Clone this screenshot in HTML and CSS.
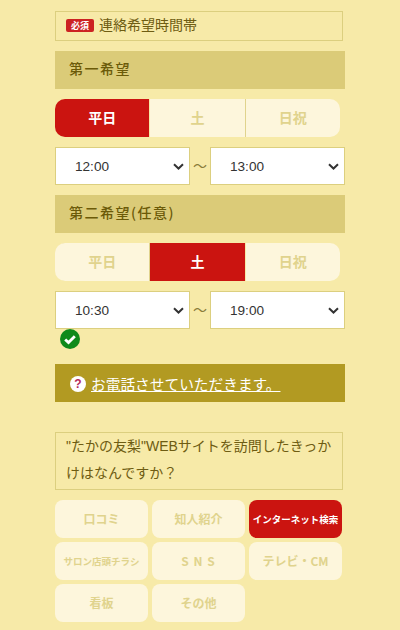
FILE: index.html
```html
<!DOCTYPE html>
<html lang="ja">
<head>
<meta charset="utf-8">
<title>連絡希望時間帯</title>
<link rel="stylesheet" href="styles.css">
</head>
<body>
<main class="form">
  <div class="label-box label-one"><span class="req">必須</span><span class="label-text">連絡希望時間帯</span></div>
  <h3 class="heading">第一希望</h3>
  <div class="toggle">
    <div class="seg seg-on">平日</div>
    <div class="seg">土</div>
    <div class="seg">日祝</div>
  </div>
  <div class="times">
    <select class="sel"><option>12:00</option></select>
    <span class="tilde">～</span>
    <select class="sel"><option>13:00</option></select>
  </div>
  <h3 class="heading">第二希望(任意)</h3>
  <div class="toggle">
    <div class="seg">平日</div>
    <div class="seg seg-on">土</div>
    <div class="seg">日祝</div>
  </div>
  <div class="times">
    <select class="sel"><option>10:30</option></select>
    <span class="tilde">～</span>
    <select class="sel"><option>19:00</option></select>
  </div>
  <div class="check-row">
    <svg class="check" viewBox="0 0 20 20" width="20" height="20"><circle cx="10" cy="10" r="10" fill="#0f8a1a"/><path d="M5.2 10.4l3.3 3.2 6.3-6.4" fill="none" stroke="#fff" stroke-width="2.8"/></svg>
  </div>
  <div class="phone-bar">
    <span class="q">?</span><a class="phone-link" href="#">お電話させていただきます。</a>
  </div>
  <div class="label-box label-two">"たかの友梨"WEBサイトを訪問したきっかけはなんですか？</div>
  <div class="choices">
    <div class="choice">口コミ</div>
    <div class="choice">知人紹介</div>
    <div class="choice choice-on small">インターネット検索</div>
    <div class="choice small">サロン店頭チラシ</div>
    <div class="choice wide">S N S</div>
    <div class="choice">テレビ・CM</div>
    <div class="choice">看板</div>
    <div class="choice">その他</div>
  </div>
</main>
</body>
</html>
```
FILE: styles.css
```css
* { box-sizing: border-box; }
html, body { margin: 0; padding: 0; }
body {
  background: #f7eaa8;
  height: 630px;
  overflow: hidden;
  font-family: "Noto Sans CJK JP", "Liberation Sans", sans-serif;
  color: #6b5a10;
}
.form {
  width: 290px;
  margin-left: 55px;
  padding-top: 11px;
}
.label-box {
  width: 288px;
  border: 1px solid #dccf7f;
  font-size: 14px;
  color: #6e5c12;
}
.label-one {
  height: 30px;
  display: flex;
  align-items: center;
  padding-left: 10px;
  padding-bottom: 2px;
  gap: 5px;
}
.label-text {
  line-height: 1;
  margin-bottom: 2px;
}
.req {
  background: #cc2222;
  color: #fff;
  font-size: 9px;
  font-weight: 700;
  width: 28px;
  height: 13px;
  line-height: 13px;
  text-align: center;
  border-radius: 2px;
}
.heading {
  margin: 10px 0;
  height: 38px;
  line-height: 35px;
  background: #dbcb78;
  padding-left: 14px;
  font-size: 14px;
  font-weight: 500;
  letter-spacing: 1.5px;
  color: #6b5a08;
}
.toggle {
  display: flex;
  width: 285px;
  height: 38px;
  margin-bottom: 10px;
  gap: 1px;
}
.seg {
  flex: 1;
  background: #fdf6dc;
  color: #e0d38d;
  font-size: 14px;
  font-weight: 700;
  display: flex;
  align-items: center;
  justify-content: center;
  padding-bottom: 2px;
  box-shadow: 1px 0 0 #e0d38d;
}
.seg:last-child { box-shadow: none; }
.seg:first-child { border-radius: 10px 0 0 10px; }
.seg:last-child { border-radius: 0 10px 10px 0; }
.seg-on {
  background: #cb1410;
  color: #fff;
  box-shadow: none;
}
.seg-on:nth-child(2) { border-radius: 0; }
.times {
  display: flex;
  height: 38px;
  align-items: stretch;
}
.sel {
  appearance: none;
  width: 135px;
  height: 38px;
  background-color: #fff;
  background-image: url("data:image/svg+xml,%3Csvg xmlns='http://www.w3.org/2000/svg' width='11' height='7'%3E%3Cpath d='M1 1.2l4.5 4.3L10 1.2' fill='none' stroke='%23333' stroke-width='2'/%3E%3C/svg%3E");
  background-repeat: no-repeat;
  background-position: right 5px center;
  border: 1px solid #dccf7f;
  border-radius: 0;
  padding-left: 19px;
  font-family: "Liberation Sans", sans-serif;
  font-size: 13.6px;
  color: #333;
  outline: none;
}
.tilde {
  width: 20px;
  text-align: center;
  font-size: 14px;
  line-height: 36px;
  color: #8a7c3a;
}
.check-row {
  height: 35px;
  padding-left: 5px;
}
.check { display: block; }
.phone-bar {
  height: 38px;
  background: #b29a22;
  display: flex;
  align-items: center;
  padding-left: 15px;
  gap: 5px;
  font-size: 14px;
}
.q {
  width: 16px;
  height: 16px;
  margin-top: 2px;
  border-radius: 50%;
  background: #fff;
  color: #b52a5a;
  font-family: "Liberation Sans", sans-serif;
  font-size: 12px;
  font-weight: 700;
  line-height: 16px;
  text-align: center;
}
.phone-link {
  color: #fff;
  text-decoration: underline;
  font-size: 14.7px;
}
.label-two {
  margin-top: 30px;
  height: 58px;
  padding: 0 5px 0 10px;
  line-height: 27px;
  font-family: "Liberation Sans", "Noto Sans CJK JP", sans-serif;
  color: #6e5c12;
  font-size: 14px;
}
.choices {
  display: grid;
  grid-template-columns: repeat(3, 93px);
  grid-auto-rows: 38px;
  column-gap: 4px;
  row-gap: 4px;
  margin-top: 10px;
}
.choice {
  background: #fdf6dc;
  color: #e0d38d;
  border-radius: 8px;
  font-size: 12px;
  font-weight: 700;
  display: flex;
  align-items: center;
  justify-content: center;
  padding-bottom: 1px;
  white-space: nowrap;
}
.small { font-size: 9.5px; }
.wide { letter-spacing: 1px; }
.choice-on {
  background: #cb1410;
  color: #fff;
}
```
